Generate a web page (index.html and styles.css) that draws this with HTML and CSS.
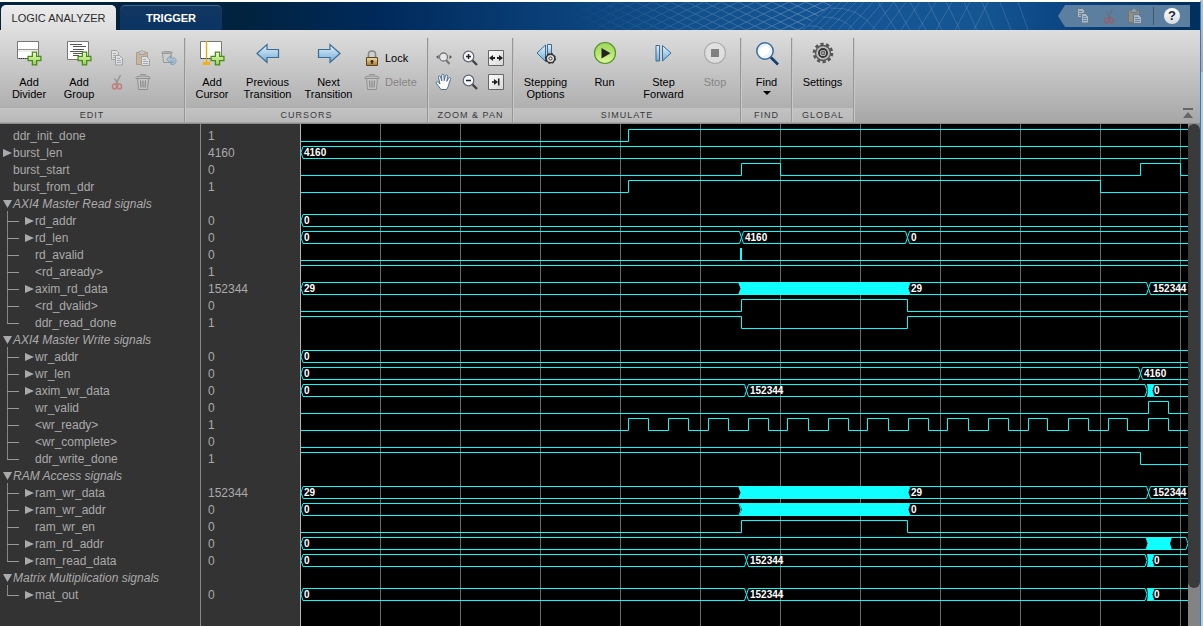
FILE: index.html
```html
<!DOCTYPE html>
<html lang="en">
<head>
<meta charset="utf-8">
<title>Logic Analyzer</title>
<link rel="stylesheet" href="styles.css">
</head>
<body>
<svg class="defs" aria-hidden="true">
  <defs>
    <linearGradient id="g-blue" x1="0" y1="0" x2="0" y2="1"><stop offset="0" stop-color="#e4f3fc"/><stop offset="1" stop-color="#6fabd6"/></linearGradient>
    <linearGradient id="g-green" x1="0" y1="0" x2="0" y2="1"><stop offset="0" stop-color="#edfbc9"/><stop offset="1" stop-color="#8ecf4a"/></linearGradient>
    <linearGradient id="g-run" x1="0" y1="0" x2="0" y2="1"><stop offset="0" stop-color="#9fd65e"/><stop offset=".5" stop-color="#b5e56e"/><stop offset="1" stop-color="#e2f7a0"/></linearGradient>
    <linearGradient id="g-gold" x1="0" y1="0" x2="0" y2="1"><stop offset="0" stop-color="#f0dca4"/><stop offset="1" stop-color="#a37a34"/></linearGradient>
    <linearGradient id="g-white" x1="0" y1="0" x2="1" y2="1"><stop offset="0" stop-color="#fff"/><stop offset="1" stop-color="#d6d6d6"/></linearGradient>
    <symbol id="plus" viewBox="0 0 14 14"><path d="M5 1h4v4h4v4H9v4H5V9H1V5h4z" fill="url(#g-green)" stroke="#4c8a1f" stroke-width="1.2"/></symbol>
    <symbol id="copy" viewBox="0 0 16 16"><path d="M2.500.500h5l2 2v7h-7z" fill="#eee" stroke="#777"/><path d="M4 3.500h3M4 5.500h4M4 7.500h3" stroke="#888"/><path d="M6.500 5.500h4l3 3v6.500h-7z" fill="#f2f2f2" stroke="#777"/><path d="M8 8.500h3M8 10.500h4M8 12.500h4" stroke="#7a8fa8"/></symbol>
    <symbol id="paste" viewBox="0 0 16 16"><path d="M1.500 2.500h11v12h-11z" fill="#c9a269" stroke="#8a6d42"/><path d="M4 1.500h1.500L6.500.500h1l1 1H10v3H4z" fill="#bbb" stroke="#777"/><path d="M6.500 6.500h5l3 3v6h-8z" fill="#f2f2f2" stroke="#777"/><path d="M8 9.500h3M8 11.500h5M8 13.500h5" stroke="#7a8fa8"/></symbol>
    <symbol id="cut" viewBox="0 0 16 16"><path d="M11.500 1L7 10M5.500 4.500L9.500 11" stroke="#666" stroke-width="1.400" fill="none"/><ellipse cx="5.500" cy="12.500" rx="2" ry="2.500" fill="none" stroke="#c8403c" stroke-width="1.400"/><ellipse cx="10.500" cy="12.500" rx="2" ry="2.500" fill="none" stroke="#c8403c" stroke-width="1.400"/></symbol>
    <symbol id="trash" viewBox="0 0 16 16"><path d="M2.500 4.500h11l-1 11h-9z" fill="#c8c8c8" stroke="#666"/><path d="M1 3.500c0-2 14-2 14 0v1H1z" fill="#bbb" stroke="#666"/><path d="M5.500 1.500V.500h5v1" fill="none" stroke="#666"/><path d="M5.500 6.500l.500 7M8 6.500v7M10.500 6.500l-.500 7" stroke="#555" stroke-width="1.200" fill="none"/></symbol>
    <symbol id="zoomglass" viewBox="0 0 18 18"><path d="M10.500 10.500l5.500 5.500" stroke="#444" stroke-width="2.400"/><circle cx="7.500" cy="7.500" r="5.300" fill="#f4f8fb" stroke="#667" stroke-width="1.200"/></symbol>
  </defs>
</svg>

<div class="window">
  <header class="titlebar">
    <svg class="mesh" aria-hidden="true" preserveAspectRatio="xMaxYMid slice" viewBox="0 0 700 28">
      <defs>
        <linearGradient id="fade"><stop offset="0" stop-color="#fff" stop-opacity="0"/><stop offset=".5" stop-color="#fff" stop-opacity=".16"/><stop offset="1" stop-color="#fff" stop-opacity=".2"/></linearGradient>
        <linearGradient id="fade2"><stop offset="0" stop-color="#fff" stop-opacity=".2"/><stop offset="1" stop-color="#fff" stop-opacity=".03"/></linearGradient>
        <pattern id="lattice" width="17" height="8" patternUnits="userSpaceOnUse"><path d="M0 0l17 8M0 8L17 0" stroke="#fff" fill="none"/></pattern>
        <linearGradient id="maskfade"><stop offset="0" stop-color="#000"/><stop offset="1" stop-color="#444"/></linearGradient>
        <mask id="m"><path d="M60 0H335L300 28H90z" fill="url(#maskfade)"/></mask>
      </defs>
      <g mask="url(#m)"><path d="M60 0H340V28H60z" fill="url(#lattice)"/></g>
      <g fill="none" stroke="#fff" stroke-opacity=".14">
        <path d="M335 0l-32 28M341 0l-30 28M348 0l-29 28M356 0l-28 28M364 0l-26 28M373 0l-25 28M383 0l-24 28M394 0l-22 28M406 0l-21 28M420 0l-19 28M436 0l-18 28M452 0l-16 28M470 0l-15 28M488 0l-14 28"/>
        <path d="M330 6q28-2 46 22M322 15q20-1 32 13M308 24q10-1 16 4M378 0l18 28M394 0l16 28M410 0l16 28M428 0l14 28M446 0l14 28M464 0l13 28M482 0l12 28M500 0l11 28M518 0l10 28"/>
      </g>
    </svg>
    <nav class="tabs">
      <button class="tab tab-active" type="button">LOGIC ANALYZER</button>
      <button class="tab" type="button">TRIGGER</button>
    </nav>
    <div class="quick">
      <button type="button" disabled aria-label="Copy"><svg width="16" height="16"><use href="#copy"/></svg></button>
      <button type="button" disabled aria-label="Cut"><svg width="16" height="16"><use href="#cut"/></svg></button>
      <button type="button" disabled aria-label="Paste"><svg width="16" height="16"><use href="#paste"/></svg></button>
      <span class="quick-rule"></span>
      <button type="button" class="help" aria-label="Help"><span>?</span></button>
    </div>
  </header>

  <div class="ribbon">
    <section class="group edit">
      <div class="tools">
        <button class="big" type="button">
          <svg width="26" height="26" viewBox="0 0 26 26"><path d="M1.500 1.500h21v17h-21z" fill="#fff" stroke="#777"/><path d="M2 9.500h20" stroke="#999"/><path d="M2 11h20" stroke="#ddd"/><path d="M3 18.500h10" stroke="#333" stroke-dasharray="1 1"/><use href="#plus" x="11" y="11" width="15" height="15"/></svg>
          <span>Add<br>Divider</span></button>
        <button class="big" type="button">
          <svg width="26" height="26" viewBox="0 0 26 26"><path d="M1.500 1.500h21v18h-21z" fill="#fff" stroke="#777"/><path d="M4 4.500h12M7 6.500h13M7 9.500h11M4 11.500h13M7 13.500h10M7 15.500h6" stroke="#555"/><use href="#plus" x="11" y="11" width="15" height="15"/></svg>
          <span>Add<br>Group</span></button>
        <div class="grid">
          <button type="button" disabled aria-label="Copy"><svg width="16" height="16"><use href="#copy"/></svg></button>
          <button type="button" disabled aria-label="Paste"><svg width="16" height="16"><use href="#paste"/></svg></button>
          <button type="button" disabled aria-label="Restore"><svg width="16" height="16" viewBox="0 0 16 16"><path d="M1.500 3.500h9l-1 9h-7z" fill="#ccc" stroke="#666"/><path d="M.500 3c0-2 11-2 11 0z" fill="#bbb" stroke="#666"/><path d="M5.500 9.500l4-4v2.500h3.500c3 0 3 6.500-1.500 6.500H10v-2h2c1.500 0 1-1.500.500-1.500h-3v2.500z" fill="#8dbbe0" stroke="#47749c"/></svg></button>
          <button type="button" disabled aria-label="Cut"><svg width="16" height="16"><use href="#cut"/></svg></button>
          <button type="button" disabled aria-label="Delete"><svg width="16" height="16"><use href="#trash"/></svg></button>
        </div>
      </div>
      <h2>EDIT</h2>
    </section>

    <section class="group cursors">
      <div class="tools">
        <button class="big" type="button">
          <svg width="26" height="26" viewBox="0 0 26 26"><path d="M1.500 1.500h21v17h-21z" fill="#fff" stroke="#777"/><path d="M2 18.500h14" stroke="#333" stroke-dasharray="1 1"/><path d="M7.500 1v21" stroke="#f0a80c" stroke-width="1.400"/><path d="M4 22h7v3H4z" fill="#f5ae12"/><use href="#plus" x="11" y="11" width="15" height="15"/></svg>
          <span>Add<br>Cursor</span></button>
        <button class="big wide" type="button">
          <svg width="26" height="26" viewBox="0 0 26 26"><path d="M2 13.500L12 4.500v5h11.500v8H12v5z" fill="url(#g-blue)" stroke="#3b6a94" stroke-width="1.200"/></svg>
          <span>Previous<br>Transition</span></button>
        <button class="big wide" type="button">
          <svg width="26" height="26" viewBox="0 0 26 26"><path d="M24 13.500L14 4.500v5H2.500v8H14v5z" fill="url(#g-blue)" stroke="#3b6a94" stroke-width="1.200"/></svg>
          <span>Next<br>Transition</span></button>
        <div class="list">
          <button type="button"><svg width="16" height="16" viewBox="0 0 16 16"><path d="M4.500 8V4c0-4 7-4 7 0v4" fill="none" stroke="#888" stroke-width="1.600"/><path d="M2.500 7.500h11v8h-11z" fill="url(#g-gold)" stroke="#5d4522"/><path d="M8 10v4M6.500 11.500h3" stroke="#2c1e08" stroke-width="1.400"/></svg>Lock</button>
          <button type="button" disabled><svg width="16" height="16"><use href="#trash"/></svg>Delete</button>
        </div>
      </div>
      <h2>CURSORS</h2>
    </section>

    <section class="group zoom">
      <div class="tools">
        <div class="grid">
          <button type="button" aria-label="Zoom in time"><svg width="18" height="18" viewBox="0 0 18 18"><path d="M11 11l3.500 4" stroke="#777" stroke-width="2"/><circle cx="8.500" cy="8" r="4" fill="#e6e9ec" stroke="#777" stroke-width="1.300"/><path d="M3.500 6v4L1 8zM14.500 6v4L17 8z" fill="#555"/></svg></button>
          <button type="button" aria-label="Zoom in"><svg width="18" height="18" viewBox="0 0 18 18"><use href="#zoomglass" width="18" height="18"/><path d="M7.500 5v5M5 7.500h5" stroke="#222" stroke-width="1.500"/></svg></button>
          <button type="button" aria-label="Fit to view"><svg width="18" height="18" viewBox="0 0 18 18"><path d="M1.500 1.500h15v15h-15z" fill="url(#g-white)" stroke="#666"/><path d="M2 9l4-3v2h2v2H6v2zM16 9l-4-3v2h-2v2h2v2z" fill="#222"/></svg></button>
          <button type="button" aria-label="Pan"><svg width="18" height="18" viewBox="0 0 18 18"><path d="M6 16.500L1.500 10.500c-1-1.600 1-2.400 2-1.200L5 11 3.500 4.500c-.4-1.700 1.700-2.100 2.100-.5L6.800 8 6.700 2.600c0-1.800 2.200-1.800 2.300 0l.2 5L10.400 3c.4-1.600 2.500-1.200 2.200.5L11.800 8.300l1.700-3c.9-1.500 2.800-.5 2 1.100-1.800 3.600-1.500 7-4 10.100z" fill="#fff" stroke="#4b6d8e"/></svg></button>
          <button type="button" aria-label="Zoom out"><svg width="18" height="18" viewBox="0 0 18 18"><use href="#zoomglass" width="18" height="18"/><path d="M5 7.500h5" stroke="#222" stroke-width="1.500"/></svg></button>
          <button type="button" aria-label="Go to end"><svg width="18" height="18" viewBox="0 0 18 18"><path d="M1.500 1.500h15v15h-15z" fill="url(#g-white)" stroke="#666"/><path d="M11 9L7 6v2.200H5v1.600h2V12zM11 5.500h1.500v7H11z" fill="#222"/></svg></button>
        </div>
      </div>
      <h2>ZOOM &amp; PAN</h2>
    </section>

    <section class="group simulate">
      <div class="tools">
        <button class="big" type="button">
          <svg width="26" height="26" viewBox="0 0 26 26"><path d="M12.500 5v16.500L4 13z" fill="url(#g-blue)" stroke="#3b6a94"/><path d="M14.500 4.500h4V17h-4z" fill="url(#g-blue)" stroke="#3b6a94"/><circle cx="17.500" cy="18.500" r="4.300" fill="#ddd" stroke="#333" stroke-width="1.600"/><circle cx="17.500" cy="18.500" r="5.100" fill="none" stroke="#333" stroke-width="1" stroke-dasharray="2 2"/><circle cx="17.500" cy="18.500" r="1.500" fill="#fff" stroke="#333"/></svg>
          <span>Stepping<br>Options</span></button>
        <button class="big" type="button">
          <svg width="26" height="26" viewBox="0 0 26 26"><circle cx="13" cy="13" r="10.500" fill="url(#g-run)" stroke="#4f9424" stroke-width="1.200"/><path d="M9.500 8v10.500l9-5.200z" fill="#222"/></svg>
          <span>Run</span></button>
        <button class="big" type="button">
          <svg width="26" height="26" viewBox="0 0 26 26"><path d="M5 5.500h3.500v15.500H5z" fill="url(#g-blue)" stroke="#3b6a94"/><path d="M11.500 5.500v15.500l8.500-8z" fill="url(#g-blue)" stroke="#3b6a94"/></svg>
          <span>Step<br>Forward</span></button>
        <button class="big narrow" type="button" disabled>
          <svg width="26" height="26" viewBox="0 0 26 26"><circle cx="13" cy="13" r="10.500" fill="#eee" stroke="#888" stroke-width="1.200"/><path d="M9 9h8v8H9z" fill="#333"/></svg>
          <span>Stop</span></button>
      </div>
      <h2>SIMULATE</h2>
    </section>

    <section class="group find">
      <div class="tools">
        <button class="big" type="button">
          <svg width="26" height="26" viewBox="0 0 26 26"><path d="M16.500 17l7.500 7.500" stroke="#123f70" stroke-width="2.600"/><circle cx="11" cy="11" r="8.200" fill="#e9f3f9" stroke="#3c6d9c" stroke-width="1.500"/><path d="M5 12c2-7 8-7 11-4 0 6-5 8-8 8-2-1-3-2-3-4z" fill="#fff"/></svg>
          <span>Find</span><svg class="caret" width="8" height="4"><path d="M0 0h8L4 4z"/></svg></button>
      </div>
      <h2>FIND</h2>
    </section>

    <section class="group global">
      <div class="tools">
        <button class="big" type="button">
          <svg width="26" height="26" viewBox="0 0 26 26"><circle cx="13" cy="13" r="9" fill="none" stroke="#555" stroke-width="2.600" stroke-dasharray="3.200 2.455"/><circle cx="13" cy="13" r="7.500" fill="#bbb" stroke="#555" stroke-width="1.300"/><circle cx="13" cy="13" r="4" fill="#ddd" stroke="#333" stroke-width="1.800"/><circle cx="13" cy="13" r="2" fill="#999" stroke="#555"/></svg>
          <span>Settings</span></button>
      </div>
      <h2>GLOBAL</h2>
    </section>

    <button class="collapse" type="button" aria-label="Collapse toolstrip"><svg width="12" height="12" viewBox="0 0 12 12"><path d="M1 1h10v2H1zM6 5l5 6H1z" fill="#666"/></svg></button>
  </div>

  <main class="viewer">
    <div class="signals">
      <table>
        <colgroup><col class="c-name"><col class="c-value"><col></colgroup>
        <tbody>
          <tr><td class="name">ddr_init_done</td><td>1</td><td><svg class="wave"><path d="M0 13.500H327.500V1.500H3000"/></svg></td></tr>
          <tr><td class="name"><button class="closed" aria-label="Expand"></button>burst_len</td><td>4160</td><td><svg class="wave"><path d="M0 7.500l2-6H3000M0 7.500l2 6H3000"/><text x="3" y="11">4160</text></svg></td></tr>
          <tr><td class="name">burst_start</td><td>0</td><td><svg class="wave"><path d="M0 13.500H440.500V1.500H479.500V13.500H839.500V1.500H879.500V13.500H3000"/></svg></td></tr>
          <tr><td class="name">burst_from_ddr</td><td>1</td><td><svg class="wave"><path d="M0 13.500H327.500V1.500H799.500V13.500H3000"/></svg></td></tr>

          <tr class="heading"><td class="name"><button class="open" aria-label="Collapse"></button>AXI4 Master Read signals</td><td></td><td></td></tr>
          <tr class="child"><td class="name"><button class="closed" aria-label="Expand"></button>rd_addr</td><td>0</td><td><svg class="wave"><path d="M0 7.500l2-6H3000M0 7.500l2 6H3000"/><text x="3" y="11">0</text></svg></td></tr>
          <tr class="child"><td class="name"><button class="closed" aria-label="Expand"></button>rd_len</td><td>0</td><td><svg class="wave"><path d="M0 7.500l2-6H438.500l2 6-2 6H2zM440.500 7.500l2-6H604.500l2 6-2 6H442.500zM606.500 7.500l2-6H3000M606.500 7.500l2 6H3000"/><text x="3" y="11">0</text><text x="444" y="11">4160</text><text x="610" y="11">0</text></svg></td></tr>
          <tr class="child"><td class="name">rd_avalid</td><td>0</td><td><svg class="wave"><path d="M0 13.500H3000"/><path class="solid" d="M439 1h2v13h-2z"/></svg></td></tr>
          <tr class="child"><td class="name">&lt;rd_aready&gt;</td><td>1</td><td><svg class="wave"><path d="M0 1.500H3000"/></svg></td></tr>
          <tr class="child"><td class="name"><button class="closed" aria-label="Expand"></button>axim_rd_data</td><td>152344</td><td><svg class="wave"><path d="M0 7.500l2-6H438l2 6-2 6H2zM607 7.500l2-6H845.500l2 6-2 6H609zM847.500 7.500l2-6H3000M847.500 7.500l2 6H3000"/><path class="solid" d="M437 1l3 6.500-3 6.500H609l-2-6.500 2-6.500z"/><text x="3" y="11">29</text><text x="610" y="11">29</text><text x="852" y="11">152344</text></svg></td></tr>
          <tr class="child"><td class="name">&lt;rd_dvalid&gt;</td><td>0</td><td><svg class="wave"><path d="M0 13.500H440.500V1.500H606.500V13.500H3000"/></svg></td></tr>
          <tr class="child last"><td class="name">ddr_read_done</td><td>1</td><td><svg class="wave"><path d="M0 1.500H440.500V13.500H606.500V1.500H3000"/></svg></td></tr>

          <tr class="heading"><td class="name"><button class="open" aria-label="Collapse"></button>AXI4 Master Write signals</td><td></td><td></td></tr>
          <tr class="child"><td class="name"><button class="closed" aria-label="Expand"></button>wr_addr</td><td>0</td><td><svg class="wave"><path d="M0 7.500l2-6H3000M0 7.500l2 6H3000"/><text x="3" y="11">0</text></svg></td></tr>
          <tr class="child"><td class="name"><button class="closed" aria-label="Expand"></button>wr_len</td><td>0</td><td><svg class="wave"><path d="M0 7.500l2-6H837.500l2 6-2 6H2zM839.500 7.500l2-6H3000M839.500 7.500l2 6H3000"/><text x="3" y="11">0</text><text x="843" y="11">4160</text></svg></td></tr>
          <tr class="child"><td class="name"><button class="closed" aria-label="Expand"></button>axim_wr_data</td><td>0</td><td><svg class="wave"><path d="M0 7.500l2-6H443.500l2 6-2 6H2zM445.500 7.500l2-6H844l2 6-2 6H447.500zM851 7.500l2-6H3000M851 7.500l2 6H3000"/><path class="solid" d="M846 1l1 6.500-1 6.500H853l-2-6.500 2-6.500z"/><text x="3" y="11">0</text><text x="449" y="11">152344</text><text x="853" y="11">0</text></svg></td></tr>
          <tr class="child"><td class="name">wr_valid</td><td>0</td><td><svg class="wave"><path d="M0 13.500H847.500V1.500H867.500V13.500H3000"/></svg></td></tr>
          <tr class="child"><td class="name">&lt;wr_ready&gt;</td><td>1</td><td><svg class="wave"><path d="M0 13.500H327.500V1.500H347.500V13.500H367.500V1.500H387.500V13.500H407.500V1.500H427.500V13.500H447.500V1.500H467.500V13.500H486.500V1.500H507.500V13.500H527.500V1.500H547.500V13.500H566.500V1.500H587.500V13.500H607.500V1.500H627.500V13.500H646.500V1.500H667.500V13.500H687.500V1.500H707.500V13.500H727.500V1.500H746.500V13.500H767.500V1.500H787.500V13.500H807.500V1.500H826.500V13.500H847.500V1.500H867.500V13.500H3000"/></svg></td></tr>
          <tr class="child"><td class="name">&lt;wr_complete&gt;</td><td>0</td><td><svg class="wave"><path d="M0 13.500H3000"/></svg></td></tr>
          <tr class="child last"><td class="name">ddr_write_done</td><td>1</td><td><svg class="wave"><path d="M0 1.500H839.500V13.500H3000"/></svg></td></tr>

          <tr class="heading"><td class="name"><button class="open" aria-label="Collapse"></button>RAM Access signals</td><td></td><td></td></tr>
          <tr class="child"><td class="name"><button class="closed" aria-label="Expand"></button>ram_wr_data</td><td>152344</td><td><svg class="wave"><path d="M0 7.500l2-6H438l2 6-2 6H2zM607 7.500l2-6H845.500l2 6-2 6H609zM847.500 7.500l2-6H3000M847.500 7.500l2 6H3000"/><path class="solid" d="M437 1l3 6.500-3 6.500H609l-2-6.500 2-6.500z"/><text x="3" y="11">29</text><text x="610" y="11">29</text><text x="852" y="11">152344</text></svg></td></tr>
          <tr class="child"><td class="name"><button class="closed" aria-label="Expand"></button>ram_wr_addr</td><td>0</td><td><svg class="wave"><path d="M0 7.500l2-6H438l2 6-2 6H2zM607 7.500l2-6H3000M607 7.500l2 6H3000"/><path class="solid" d="M438 1l3 6.500-3 6.500H609l-2-6.500 2-6.500z"/><text x="3" y="11">0</text><text x="610" y="11">0</text></svg></td></tr>
          <tr class="child"><td class="name">ram_wr_en</td><td>0</td><td><svg class="wave"><path d="M0 13.500H440.500V1.500H606.500V13.500H3000"/></svg></td></tr>
          <tr class="child"><td class="name"><button class="closed" aria-label="Expand"></button>ram_rd_addr</td><td>0</td><td><svg class="wave"><path d="M0 7.500l2-6H845l2 6-2 6H2zM868 7.500l2-6H885l2 6-2 6H870z"/><path class="solid" d="M845 1l2 6.500-2 6.500H871l-2-6.500 2-6.500z"/><text x="3" y="11">0</text></svg></td></tr>
          <tr class="child last"><td class="name"><button class="closed" aria-label="Expand"></button>ram_read_data</td><td>0</td><td><svg class="wave"><path d="M0 7.500l2-6H443.500l2 6-2 6H2zM445.500 7.500l2-6H844l2 6-2 6H447.500zM851 7.500l2-6H3000M851 7.500l2 6H3000"/><path class="solid" d="M846 1l1 6.500-1 6.500H853l-2-6.500 2-6.500z"/><text x="3" y="11">0</text><text x="449" y="11">152344</text><text x="853" y="11">0</text></svg></td></tr>

          <tr class="heading"><td class="name"><button class="open" aria-label="Collapse"></button>Matrix Multiplication signals</td><td></td><td></td></tr>
          <tr class="child last"><td class="name"><button class="closed" aria-label="Expand"></button>mat_out</td><td>0</td><td><svg class="wave"><path d="M0 7.500l2-6H443.500l2 6-2 6H2zM445.500 7.500l2-6H844l2 6-2 6H447.500zM851 7.500l2-6H3000M851 7.500l2 6H3000"/><path class="solid" d="M846 1l1 6.500-1 6.500H853l-2-6.500 2-6.500z"/><text x="3" y="11">0</text><text x="449" y="11">152344</text><text x="853" y="11">0</text></svg></td></tr>
        </tbody>
      </table>
    </div>
    <div class="scrollbar"><div class="thumb"></div></div>
  </main>
</div>
</body>
</html>
```
FILE: styles.css
```css
* { box-sizing: border-box; }

body {
  margin: 0;
  padding: 0 2px 0 0;
  background: linear-gradient(#c9bdb6, #b8aaa3 72px, #c9c9c9 72px);
  font-family: "Liberation Sans", Arial, sans-serif;
  font-size: 11px;
}

button {
  margin: 0;
  padding: 0;
  border: 0;
  background: none;
  font: inherit;
  color: inherit;
}

svg { display: block; flex: none; }
.defs { position: absolute; width: 0; height: 0; }

.window {
  display: flex;
  flex-direction: column;
  min-height: 100vh;
  border-top: 2px solid #fff;
  border-right: 1px solid #1283de;
}

/* Title bar */
.titlebar {
  position: relative;
  display: flex;
  justify-content: space-between;
  height: 28px;
  background: linear-gradient(to right, #01233d 0, #01233f 20%, #002a5c 32%, #0a4078 46%, #12508c 58%, #155595 72%, #145592 82%, #0b4482 89%, #002f60 98%);
}
.mesh { position: absolute; top: 0; right: 0; width: 700px; height: 28px; }

.tabs { position: relative; display: flex; gap: 4px; padding: 3px 0 0 1px; }
.tab {
  width: 102px;
  border-radius: 5px 5px 0 0;
  border-top: 1px solid #3a6a94;
  background: linear-gradient(#123660, #0b3565);
  color: #fff;
  font-weight: bold;
}
.tab-active {
  width: 115px;
  border-top-color: #f4f4f4;
  background: linear-gradient(#ebebeb, #dedede);
  color: #2b2b2b;
  font-weight: normal;
}

.quick {
  position: relative;
  display: flex;
  align-items: center;
  height: 22px;
  margin: 3px 10px 0 0;
  padding: 0 10px 0 17px;
  gap: 10px;
  background: #5d7f9f;
  clip-path: polygon(7px 0, 100% 0, 100% 100%, 7px 100%, 0 50%);
}
.quick button:disabled { opacity: .5; }
.quick-rule { width: 1px; height: 18px; background: #3f566b; }
.quick .help {
  width: 16px;
  height: 16px;
  border-radius: 50%;
  background: linear-gradient(#fff, #d5dbe0);
  color: #1d2a3a;
  font-size: 13px;
  font-weight: bold;
  line-height: 16px;
}

/* Toolstrip */
.ribbon {
  position: relative;
  display: flex;
  gap: 1px;
  height: 94px;
  padding: 8px 0 1px;
  border-bottom: 1px solid #8b8b8b;
  background: linear-gradient(#dedede, #a6a6a6);
}
.group {
  display: flex;
  flex-direction: column;
  border-right: 1px solid #979797;
  box-shadow: 1px 0 #c9c9c9;
}
.group h2 {
  margin: 0;
  height: 14px;
  background: linear-gradient(#c3c3c3, #b9b9b9);
  color: #3a3a3a;
  font-size: 9px;
  font-weight: normal;
  line-height: 14px;
  letter-spacing: 1px;
  text-align: center;
}
.tools { display: flex; height: 70px; }
.edit { width: 185px; }
.edit .tools { padding-left: 4px; }
.cursors { width: 242px; }
.cursors .tools { padding-left: 1px; }
.zoom { width: 84px; }
.zoom .tools { padding-left: 2px; }
.simulate { width: 227px; }
.simulate .tools { padding-left: 2px; }
.find { width: 50px; }
.global { width: 61px; }

.big {
  display: flex;
  flex-direction: column;
  align-items: center;
  gap: 10px;
  width: 50px;
  padding-top: 2px;
  line-height: 12px;
  text-align: center;
}
.big.wide { width: 61px; }
.simulate .big, .global .big { width: 59px; }
.simulate .narrow { width: 44px; }
.big .caret { margin-top: -7px; }
.grid {
  display: grid;
  grid-template-columns: repeat(3, 26px);
  grid-auto-rows: 24px;
  align-content: start;
  padding-top: 8px;
}
.grid button { display: grid; place-items: center; }
.list { padding: 8px 0 0 5px; }
.list button { display: flex; align-items: center; gap: 5px; height: 24px; }
.ribbon button:disabled { color: #858585; }
.ribbon button:disabled svg { opacity: .5; }
.collapse { position: absolute; right: 6px; bottom: 4px; }

/* Signal viewer */
.viewer { display: flex; flex: 1; background: #000; }
.signals {
  flex: 1;
  min-width: 0;
  padding-top: 4px;
  background:
    linear-gradient(to right, #333 200px, #8a8a8a 200px 201px, #333 201px 300px, #b5b5b5 300px 301px, transparent 301px),
    repeating-linear-gradient(to right, #6c6c6c 0 1px, transparent 1px 80px) 60px 0;
}
table { width: 100%; table-layout: fixed; border-collapse: collapse; }
.c-name { width: 200px; }
.c-value { width: 101px; }
td {
  height: 17px;
  padding: 0;
  color: #aaa;
  font-size: 12px;
  line-height: 17px;
  white-space: nowrap;
}
td:nth-child(2) { padding-left: 8px; }
.name { position: relative; padding-left: 13px; }
.child .name { padding-left: 35px; }
.heading .name { font-style: italic; }

/* Tree lines of grouped signals */
.child .name::before {
  content: "";
  position: absolute;
  left: 7px;
  top: -2px;
  width: 1px;
  height: 19px;
  background: #858585;
}
.child.last .name::before { height: 11px; }
.child .name::after {
  content: "";
  position: absolute;
  left: 7px;
  top: 8px;
  width: 12px;
  height: 1px;
  background: #999;
}
.closed, .open {
  position: absolute;
  top: 4px;
  left: 3px;
  width: 9px;
  height: 8px;
  background: #aaa;
}
.closed { clip-path: polygon(0 0, 100% 50%, 0 100%); }
.open { clip-path: polygon(0 0, 100% 0, 50% 100%); }
.child .closed { left: 25px; }

.wave { width: 100%; height: 17px; overflow: hidden; }
.wave path { fill: none; stroke: #0ff; }
.wave .solid { fill: #10ffff; stroke: none; }
.wave text { fill: #fff; font-size: 10px; font-weight: bold; }

.scrollbar { width: 12px; background: #838383; }
.thumb { height: 464px; border-radius: 6px; background: #3a3a3a; }
```
